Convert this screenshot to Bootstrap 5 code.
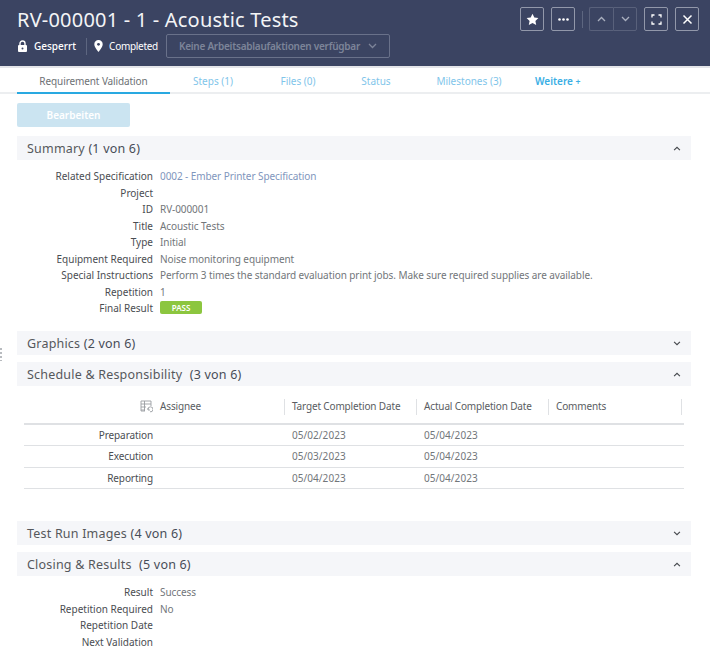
<!DOCTYPE html>
<html lang="de"><head><meta charset="utf-8"><title>RV-000001</title>
<link href="https://cdn.jsdelivr.net/npm/bootstrap@5.3.0/dist/css/bootstrap.min.css" rel="stylesheet">
<style>
html,body{height:656px;overflow:hidden}
body{font-family:"Noto Sans","Liberation Sans",sans-serif;font-size:10px;color:#4a4d52;background:#fff;position:relative}
.hdr{height:68px;background:#3b4462;color:#fff;padding:7px 11px 0 17px;border-bottom:2px solid #e4e5e9}
.ttl{font-size:20px;line-height:26px;letter-spacing:.2px;color:#f3f4f6;font-weight:400}
.sub{margin-top:1px;height:24px;font-size:10px;white-space:nowrap}
.sub b{font-weight:500;letter-spacing:0;margin:0 10px 0 6px}
.compl{letter-spacing:-.3px;margin:0 8px 0 6px}
.pin{margin-left:7px}
.vr-l{width:1px;height:17px;background:#5d6680}
.wf{width:224px;height:24px;border:1px solid #69718a;border-radius:2px;color:#7d8499;font-weight:600;letter-spacing:-.25px;padding:0 12px}
.tb{width:24px;height:24px;border:1px solid #9298aa;border-radius:2px;color:#fff}
.tb-dim{border-color:#59617b;color:#9298aa}
.tb-pair{display:flex;margin-left:-1px}
.tb-pair .tb{border-radius:0}
.tb-pair .tb:first-child{border-radius:2px 0 0 2px;border-right:0}
.tb-pair .tb:last-child{border-radius:0 2px 2px 0}
.tabs{height:26px;border-bottom:2px solid #eceef0;padding-left:17px;font-size:10px;color:#7fc5ea;white-space:nowrap}
.tb-item{height:26px;line-height:27px;text-align:center;margin-bottom:-2px}
.tb-on{width:153px;color:#6d7175;letter-spacing:-.1px;border-bottom:2px solid #29a9e1}
.more{font-weight:600;color:#3aaee4;text-align:left;padding-left:9px}
.edit{display:block;margin:9px 0 9px 17px;width:113px;height:24px;border-radius:2px;background:#cbe4f1;color:#fff;font-weight:600;font-size:10px;line-height:24px;text-align:center}
.sec{margin:0 19px 0 17px;height:24px;background:#f5f6f9;padding:2px 10px 0;font-size:12.5px;letter-spacing:.2px;color:#55585c}
.sec span span{color:#474c57;font-size:12.5px}
.sec svg{margin-top:-2px}
.gap-t{margin-top:7px}
.fields{display:grid;grid-template-columns:136px 1fr;column-gap:7px;margin:8px 0 0 17px;grid-auto-rows:16.5px;line-height:16.5px}
.fields dt{font-weight:400;text-align:right;color:#4a4d52;margin:0}
.fields dd{margin:0;color:#72767a;letter-spacing:-.08px}
.fields dd.lnk{color:#7f96bd}
.blk1{height:163px;margin-bottom:0}
.blk2{margin-bottom:0}
.pass{display:inline-block;width:42px;height:13px;line-height:13px;background:#8cc63f;color:#fff;border-radius:2px;text-align:center;font-size:8px;font-weight:600;vertical-align:1px;letter-spacing:0}
.grd{margin:0 26px 0 24px;height:135px}
.grd-r{display:grid;grid-template-columns:129px 7px 124px 8px 124px 8px 124px 8px 125px 1fr;border-bottom:1px solid #dfe1e4;height:21.3px;align-items:center;color:#72767a;letter-spacing:.05px;padding-top:1px}
.grd-h{height:39px;border-bottom:2px solid #dfe1e4;color:#5a5d62;letter-spacing:-.15px}
.grd-h>*{margin-top:3px}
.sep{width:1px;height:16px;background:#dfe1e4}
.lbl{text-align:right;color:#4a4d52;letter-spacing:-.1px}
.dots{position:absolute;left:0;top:348px;width:2px;height:13px;background:repeating-linear-gradient(#b8bbbf 0 2px,transparent 2px 4px)}
</style></head><body>
<header class="hdr">
 <div class="d-flex justify-content-between">
  <div>
   <div class="ttl">RV-000001 - 1 - Acoustic Tests</div>
   <div class="sub d-flex align-items-center">
    <svg width="11" height="12" viewBox="0 0 11 12"><path d="M3 5V3.500a2.500 2.500 0 015 0V5" fill="none" stroke="#fff" stroke-width="1.400"/><rect x="1" y="5" width="9" height="7" rx="1" fill="#fff"/><circle cx="5.500" cy="8.500" r="1" fill="#3b4462"/></svg>
    <b>Gesperrt</b><i class="vr-l"></i>
    <svg class="pin" width="9" height="12" viewBox="0 0 9 12"><path d="M4.500 0a4.200 4.200 0 00-4.200 4.200C.3 7 4.500 12 4.500 12s4.200-5 4.200-7.800A4.200 4.200 0 004.500 0z" fill="#fff"/><circle cx="4.500" cy="4.300" r="1.400" fill="#3b4462"/></svg>
    <span class="compl">Completed</span>
    <div class="wf d-flex align-items-center justify-content-between"><span>Keine Arbeitsablaufaktionen verfügbar</span><svg width="9" height="6" viewBox="0 0 9 6"><path d="M1 1l3.500 3.500L8 1" fill="none" stroke="#7d8499" stroke-width="1.300"/></svg></div>
   </div>
  </div>
  <div class="d-flex align-items-start" style="gap:7px">
   <div class="tb d-flex align-items-center justify-content-center"><svg width="13" height="13" viewBox="0 0 13 13"><path d="M6.500.8l1.800 3.800 4.100.5-3 2.800.8 4.100-3.700-2-3.700 2 .8-4.100-3-2.800 4.100-.5z" fill="#fff"/></svg></div>
   <div class="tb d-flex align-items-center justify-content-center"><svg width="11" height="3" viewBox="0 0 11 3"><circle cx="1.500" cy="1.500" r="1.300" fill="#fff"/><circle cx="5.500" cy="1.500" r="1.300" fill="#fff"/><circle cx="9.500" cy="1.500" r="1.300" fill="#fff"/></svg></div>
   <i class="vr-l mt-1"></i>
   <div class="tb-pair">
    <div class="tb tb-dim d-flex align-items-center justify-content-center"><svg width="9" height="6" viewBox="0 0 9 6"><path d="M1 5l3.500-3.500L8 5" fill="none" stroke="#aab0bf" stroke-width="1.300"/></svg></div>
    <div class="tb tb-dim d-flex align-items-center justify-content-center"><svg width="9" height="6" viewBox="0 0 9 6"><path d="M1 1l3.500 3.500L8 1" fill="none" stroke="#aab0bf" stroke-width="1.300"/></svg></div>
   </div>
   <div class="tb d-flex align-items-center justify-content-center"><svg width="11" height="11" viewBox="0 0 11 11"><path d="M1 3.500V1h2.500M7.500 1H10v2.500M10 7.500V10H7.500M3.500 10H1V7.500" fill="none" stroke="#fff" stroke-width="1.300"/></svg></div>
   <div class="tb d-flex align-items-center justify-content-center"><svg width="11" height="11" viewBox="0 0 11 11"><path d="M1.500 1.500l8 8M9.500 1.500l-8 8" stroke="#fff" stroke-width="1.500"/></svg></div>
  </div>
 </div>
</header>
<nav class="tabs d-flex">
 <div class="tb-item tb-on">Requirement Validation</div>
 <div class="tb-item" style="width:86px">Steps (1)</div>
 <div class="tb-item" style="width:84px">Files (0)</div>
 <div class="tb-item" style="width:72px">Status</div>
 <div class="tb-item" style="width:114px">Milestones (3)</div>
 <div class="tb-item more" style="width:70px">Weitere <small>+</small></div>
</nav>
<div class="edit">Bearbeiten</div>

<div class="sec d-flex align-items-center justify-content-between"><span>Summary <span>(1 von 6)</span></span><svg width="8" height="5" viewBox="0 0 9 6"><path d="M1 5l3.500-3.500L8 5" fill="none" stroke="#44474c" stroke-width="1.300"/></svg></div>
<dl class="fields blk1">
 <dt>Related Specification</dt><dd class="lnk">0002 - Ember Printer Specification</dd>
 <dt>Project</dt><dd></dd>
 <dt>ID</dt><dd>RV-000001</dd>
 <dt>Title</dt><dd>Acoustic Tests</dd>
 <dt>Type</dt><dd>Initial</dd>
 <dt>Equipment Required</dt><dd>Noise monitoring equipment</dd>
 <dt>Special Instructions</dt><dd>Perform 3 times the standard evaluation print jobs. Make sure required supplies are available.</dd>
 <dt>Repetition</dt><dd>1</dd>
 <dt>Final Result</dt><dd><span class="pass">PASS</span></dd>
</dl>
<div class="sec d-flex align-items-center justify-content-between"><span>Graphics <span>(2 von 6)</span></span><svg width="8" height="5" viewBox="0 0 9 6"><path d="M1 1l3.500 3.500L8 1" fill="none" stroke="#44474c" stroke-width="1.300"/></svg></div>
<div class="sec gap-t d-flex align-items-center justify-content-between"><span>Schedule &amp; Responsibility <span class="ms-1">(3 von 6)</span></span><svg width="8" height="5" viewBox="0 0 9 6"><path d="M1 5l3.500-3.500L8 5" fill="none" stroke="#44474c" stroke-width="1.300"/></svg></div>
<div class="grd">
 <div class="grd-r grd-h">
  <div class="d-flex justify-content-end"><svg width="13" height="13" viewBox="0 0 13 13"><path d="M1 1h10v5M1 4h10M1 7h5M1 10h4M1 1v10h4M4.500 1v10M8 9.500a2.500 2.500 0 112 2.300M8 8v2h2" fill="none" stroke="#9a9da1" stroke-width=".9"/></svg></div><div></div>
  <div>Assignee</div><i class="sep"></i><div>Target Completion Date</div><i class="sep"></i><div>Actual Completion Date</div><i class="sep"></i><div>Comments</div><i class="sep"></i>
 </div>
 <div class="grd-r"><div class="lbl">Preparation</div><div></div><div></div><div></div><div>05/02/2023</div><div></div><div>05/04/2023</div></div>
 <div class="grd-r"><div class="lbl">Execution</div><div></div><div></div><div></div><div>05/03/2023</div><div></div><div>05/04/2023</div></div>
 <div class="grd-r"><div class="lbl">Reporting</div><div></div><div></div><div></div><div>05/04/2023</div><div></div><div>05/04/2023</div></div>
</div>
<div class="sec d-flex align-items-center justify-content-between"><span>Test Run Images <span>(4 von 6)</span></span><svg width="8" height="5" viewBox="0 0 9 6"><path d="M1 1l3.500 3.500L8 1" fill="none" stroke="#44474c" stroke-width="1.300"/></svg></div>
<div class="sec gap-t d-flex align-items-center justify-content-between"><span>Closing &amp; Results <span class="ms-1">(5 von 6)</span></span><svg width="8" height="5" viewBox="0 0 9 6"><path d="M1 5l3.500-3.500L8 5" fill="none" stroke="#44474c" stroke-width="1.300"/></svg></div>
<dl class="fields blk2">
 <dt>Result</dt><dd>Success</dd>
 <dt>Repetition Required</dt><dd>No</dd>
 <dt>Repetition Date</dt><dd></dd>
 <dt>Next Validation</dt><dd></dd>
</dl>
<div class="dots"></div>
<script src="https://cdn.jsdelivr.net/npm/bootstrap@5.3.0/dist/js/bootstrap.bundle.min.js"></script>
</body></html>
